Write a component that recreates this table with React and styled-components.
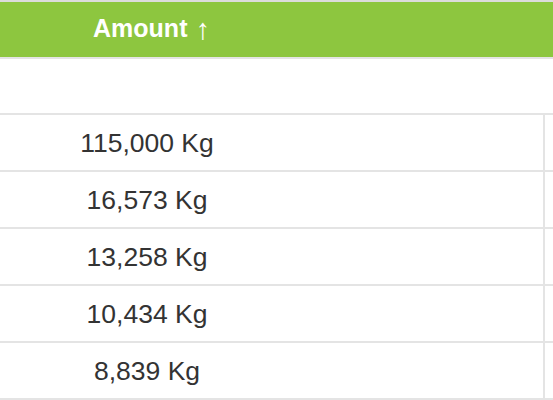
import React from 'react'
import styled, { createGlobalStyle } from 'styled-components'

const GlobalStyle = createGlobalStyle`
  html, body {
    margin: 0;
    padding: 0;
    background: #ffffff;
  }
  body {
    font-family: "Liberation Sans", Arial, sans-serif;
    overflow: hidden;
  }
`

const Viewport = styled.div`
  width: 553px;
  height: 400px;
  overflow: hidden;
`

// the visible part is a crop of a wider grid, left columns sit off screen
const Grid = styled.div`
  margin-left: -249px;
  width: 1000px;
  display: flex;
  flex-direction: column;
`

const Row = styled.div`
  display: grid;
  grid-template-columns: 794px 1fr;
  height: ${props => props.$height}px;
  border-top: ${props => props.$top ? '2px solid #dcdcdc' : 'none'};
  border-bottom: 2px solid #e4e4e4;
  background: ${props => props.$head ? '#8dc63f' : '#ffffff'};
`

const HeadCell = styled.div`
  display: flex;
  align-items: center;
  justify-content: center;
  gap: 8px;
  color: #ffffff;
  font-size: 25px;
  font-weight: bold;
  padding: 0 0 3px 7px;
`

const Arrow = styled.span`
  font-weight: normal;
  font-size: 29px;
  line-height: 1;
  margin-top: 3px;
`

const Cell = styled.div`
  display: flex;
  align-items: center;
  justify-content: center;
  color: #333333;
  font-size: 26.5px;
  padding-top: 1px;
  border-right: ${props => props.$divider ? '2px solid #e4e4e4' : 'none'};
`

const amounts = ['115,000 Kg', '16,573 Kg', '13,258 Kg', '10,434 Kg', '8,839 Kg']

function App() {
  return (
    <Viewport>
      <GlobalStyle />
      <Grid>
        <Row $head $top $height={55}>
          <HeadCell>
            Amount <Arrow>↑</Arrow>
          </HeadCell>
          <HeadCell />
        </Row>
        <Row $height={54}>
          <Cell />
          <Cell />
        </Row>
        {amounts.map(a => (
          <Row key={a} $height={55}>
            <Cell $divider>{a}</Cell>
            <Cell />
          </Row>
        ))}
      </Grid>
    </Viewport>
  )
}

export default App
